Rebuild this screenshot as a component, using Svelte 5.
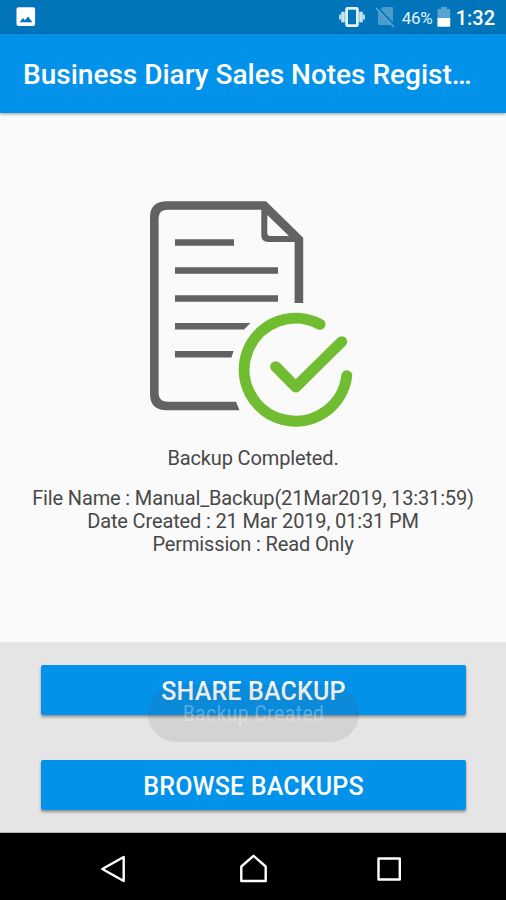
<script>
  const title = 'Business Diary Sales Notes Regist…';
  const details = [
    'File Name : Manual_Backup(21Mar2019, 13:31:59)',
    'Date Created : 21 Mar 2019, 01:31 PM',
    'Permission : Read Only'
  ];
</script>

<div class="screen">
  <div class="status">
    <svg class="photo" width="20" height="20" viewBox="0 0 20 20">
      <rect x="0.5" y="0.3" width="18.6" height="18.8" rx="2" fill="#fff" />
      <path d="M3.6 15.3 7 11l2 2.3 3-3.7 4.5 5.7z" fill="#0275ba" />
    </svg>
    <div class="indicators">
      <svg class="vibrate" width="28" height="22" viewBox="0 0 28 22">
        <path d="M2 8.500v5M26 8.500v5" stroke="#b5d9ee" stroke-width="2" />
        <path d="M5 5.800v10.400M23 5.800v10.400" stroke="#cde6f4" stroke-width="3.600" />
        <rect x="8.600" y="2.300" width="10.800" height="17.400" rx="1" fill="#0275ba" stroke="#e4f3fb" stroke-width="2.800" />
      </svg>
      <svg class="sim" width="22" height="22" viewBox="0 0 22 22">
        <path d="M8 1h9q1 0 1 1v16q0 1-1 1H4q-1 0-1-1V6z" fill="#4b9ccd" />
        <path d="M2 1 20 20" stroke="#0275ba" stroke-width="2" />
        <path d="M1 2 19 21" stroke="#5ca8d5" stroke-width="1.500" />
      </svg>
      <span class="percent">46%</span>
      <svg class="battery" width="14" height="22" viewBox="0 0 14 22">
        <path d="M4 1h6v2h3.200v17.600H.5V3H4z" fill="#55a4d2" />
        <path d="M.5 12h12.700v8.700H.5z" fill="#fff" />
      </svg>
      <span class="clock">1:32</span>
    </div>
  </div>
  <header><h1>{title}</h1></header>

  <main>
    <svg class="document" width="220" height="250" viewBox="140 190 220 250" fill="none">
      <path d="M239.500 410.300H167Q150 410.300 150 394V217Q150 201.200 167 201.200H266L303.200 237.800V303H294.600V242H268Q261.300 242 261.300 235.500V209.800H168Q158.600 209.800 158.600 218V393Q158.600 401.700 168 401.700H236zM267.300 215V233Q267.300 236 270.300 236H289z" fill="#626262" fill-rule="evenodd" />
      <path d="M175 242.500h59M175 270.500h103M175 298.500h103" stroke="#626262" stroke-width="6.600" />
      <path d="M175 323h75.500l-6.500 6.500H175zM175 351h58.500l-2 6.500H175z" fill="#626262" />
      <path d="M320 324.300A51.500 51.500 0 1 0 346.800 375.700" stroke="#71bd32" stroke-width="11" stroke-linecap="round" />
      <path d="M275.700 366.700l20 20.300 46-45.300" stroke="#71bd32" stroke-width="11" stroke-linecap="round" stroke-linejoin="round" />
    </svg>
    <p class="done">Backup Completed.</p>
    <div class="details">
      {#each details as line}<p>{line}</p>{/each}
    </div>
  </main>

  <section class="actions">
    <button class="share">SHARE BACKUP</button>
    <button>BROWSE BACKUPS</button>
    <div class="toast"><span>Backup Created</span></div>
  </section>

  <nav>
    <svg width="506" height="66" viewBox="0 833 506 66" fill="none" stroke="#fff" stroke-width="2.400" stroke-linejoin="round">
      <path d="M102.300 869 123.700 857V881z" />
      <path d="M241.300 881V866.500L253.500 855.800 265.700 866.500V881z" />
      <path d="M378.500 858.500h21.300v21h-21.300z" />
    </svg>
  </nav>
</div>

<style>
  :global(body) { margin: 0; }
  .screen {
    width: 506px;
    height: 900px;
    display: flex;
    flex-direction: column;
    overflow: hidden;
    background: #fafafa;
    font-family: Roboto, "Liberation Sans", sans-serif;
  }
  p, h1 { margin: 0; white-space: nowrap; }
  svg { display: block; flex: none; }
  .status {
    height: 34px;
    flex: none;
    box-sizing: border-box;
    padding: 0 11px 0 16px;
    display: flex;
    align-items: center;
    justify-content: space-between;
    background: #0275ba;
    color: #fff;
  }
  .indicators { display: flex; align-items: center; }
  .sim { margin-left: 9px; }
  .percent { margin-left: 5px; font-size: 17px; line-height: 34px; width: 33px; letter-spacing: -0.3px; color: #e3f2fb; padding-top: 2px; }
  .battery { margin-left: 2px; }
  .clock { margin-left: 5px; font-size: 20px; font-weight: 500; line-height: 34px; padding-top: 2px; }
  header {
    height: 79px;
    flex: none;
    box-sizing: border-box;
    padding-left: 23px;
    display: flex;
    align-items: center;
    background: #0392ea;
    box-shadow: 0 1px 3px rgba(0, 0, 0, 0.4);
    color: #fff;
    z-index: 1;
  }
  h1 { font-size: 28px; font-weight: 500; line-height: 32px; padding-top: 2px; }
  main {
    height: 529px;
    flex: none;
    box-sizing: border-box;
    padding-top: 77px;
    display: flex;
    flex-direction: column;
    align-items: center;
    color: #484848;
    font-size: 20px;
    letter-spacing: -0.14px;
  }
  .document { margin-right: 6px; }
  .done { margin-top: 6px; line-height: 24px; }
  .details { margin-top: 17px; text-align: center; line-height: 23.2px; }
  .actions {
    position: relative;
    height: 191px;
    flex: none;
    box-sizing: border-box;
    padding: 23px 40px 0 41px;
    display: flex;
    flex-direction: column;
    gap: 45px;
    background: #e5e5e5;
    border-bottom: 1px solid #b5b5b5;
  }
  button {
    height: 50px;
    flex: none;
    padding: 3px 0 0;
    border: 0;
    border-radius: 2px;
    background: #0392ea;
    box-shadow: 0 2px 3px rgba(0, 0, 0, 0.38);
    color: #fff;
    font: 500 25px/30px Roboto, "Liberation Sans", sans-serif;
    letter-spacing: 0.18px;
  }
  .toast {
    position: absolute;
    left: 148px;
    top: 43px;
    width: 211px;
    height: 57px;
    border-radius: 29px;
    background: rgba(70, 70, 70, 0.11);
    color: rgba(255, 255, 255, 0.3);
    font-family: "Roboto Condensed", Roboto, sans-serif;
    font-size: 22px;
    letter-spacing: 0.35px;
    line-height: 57px;
    text-align: center;
  }
  nav { height: 67px; flex: none; background: #000; }
</style>
